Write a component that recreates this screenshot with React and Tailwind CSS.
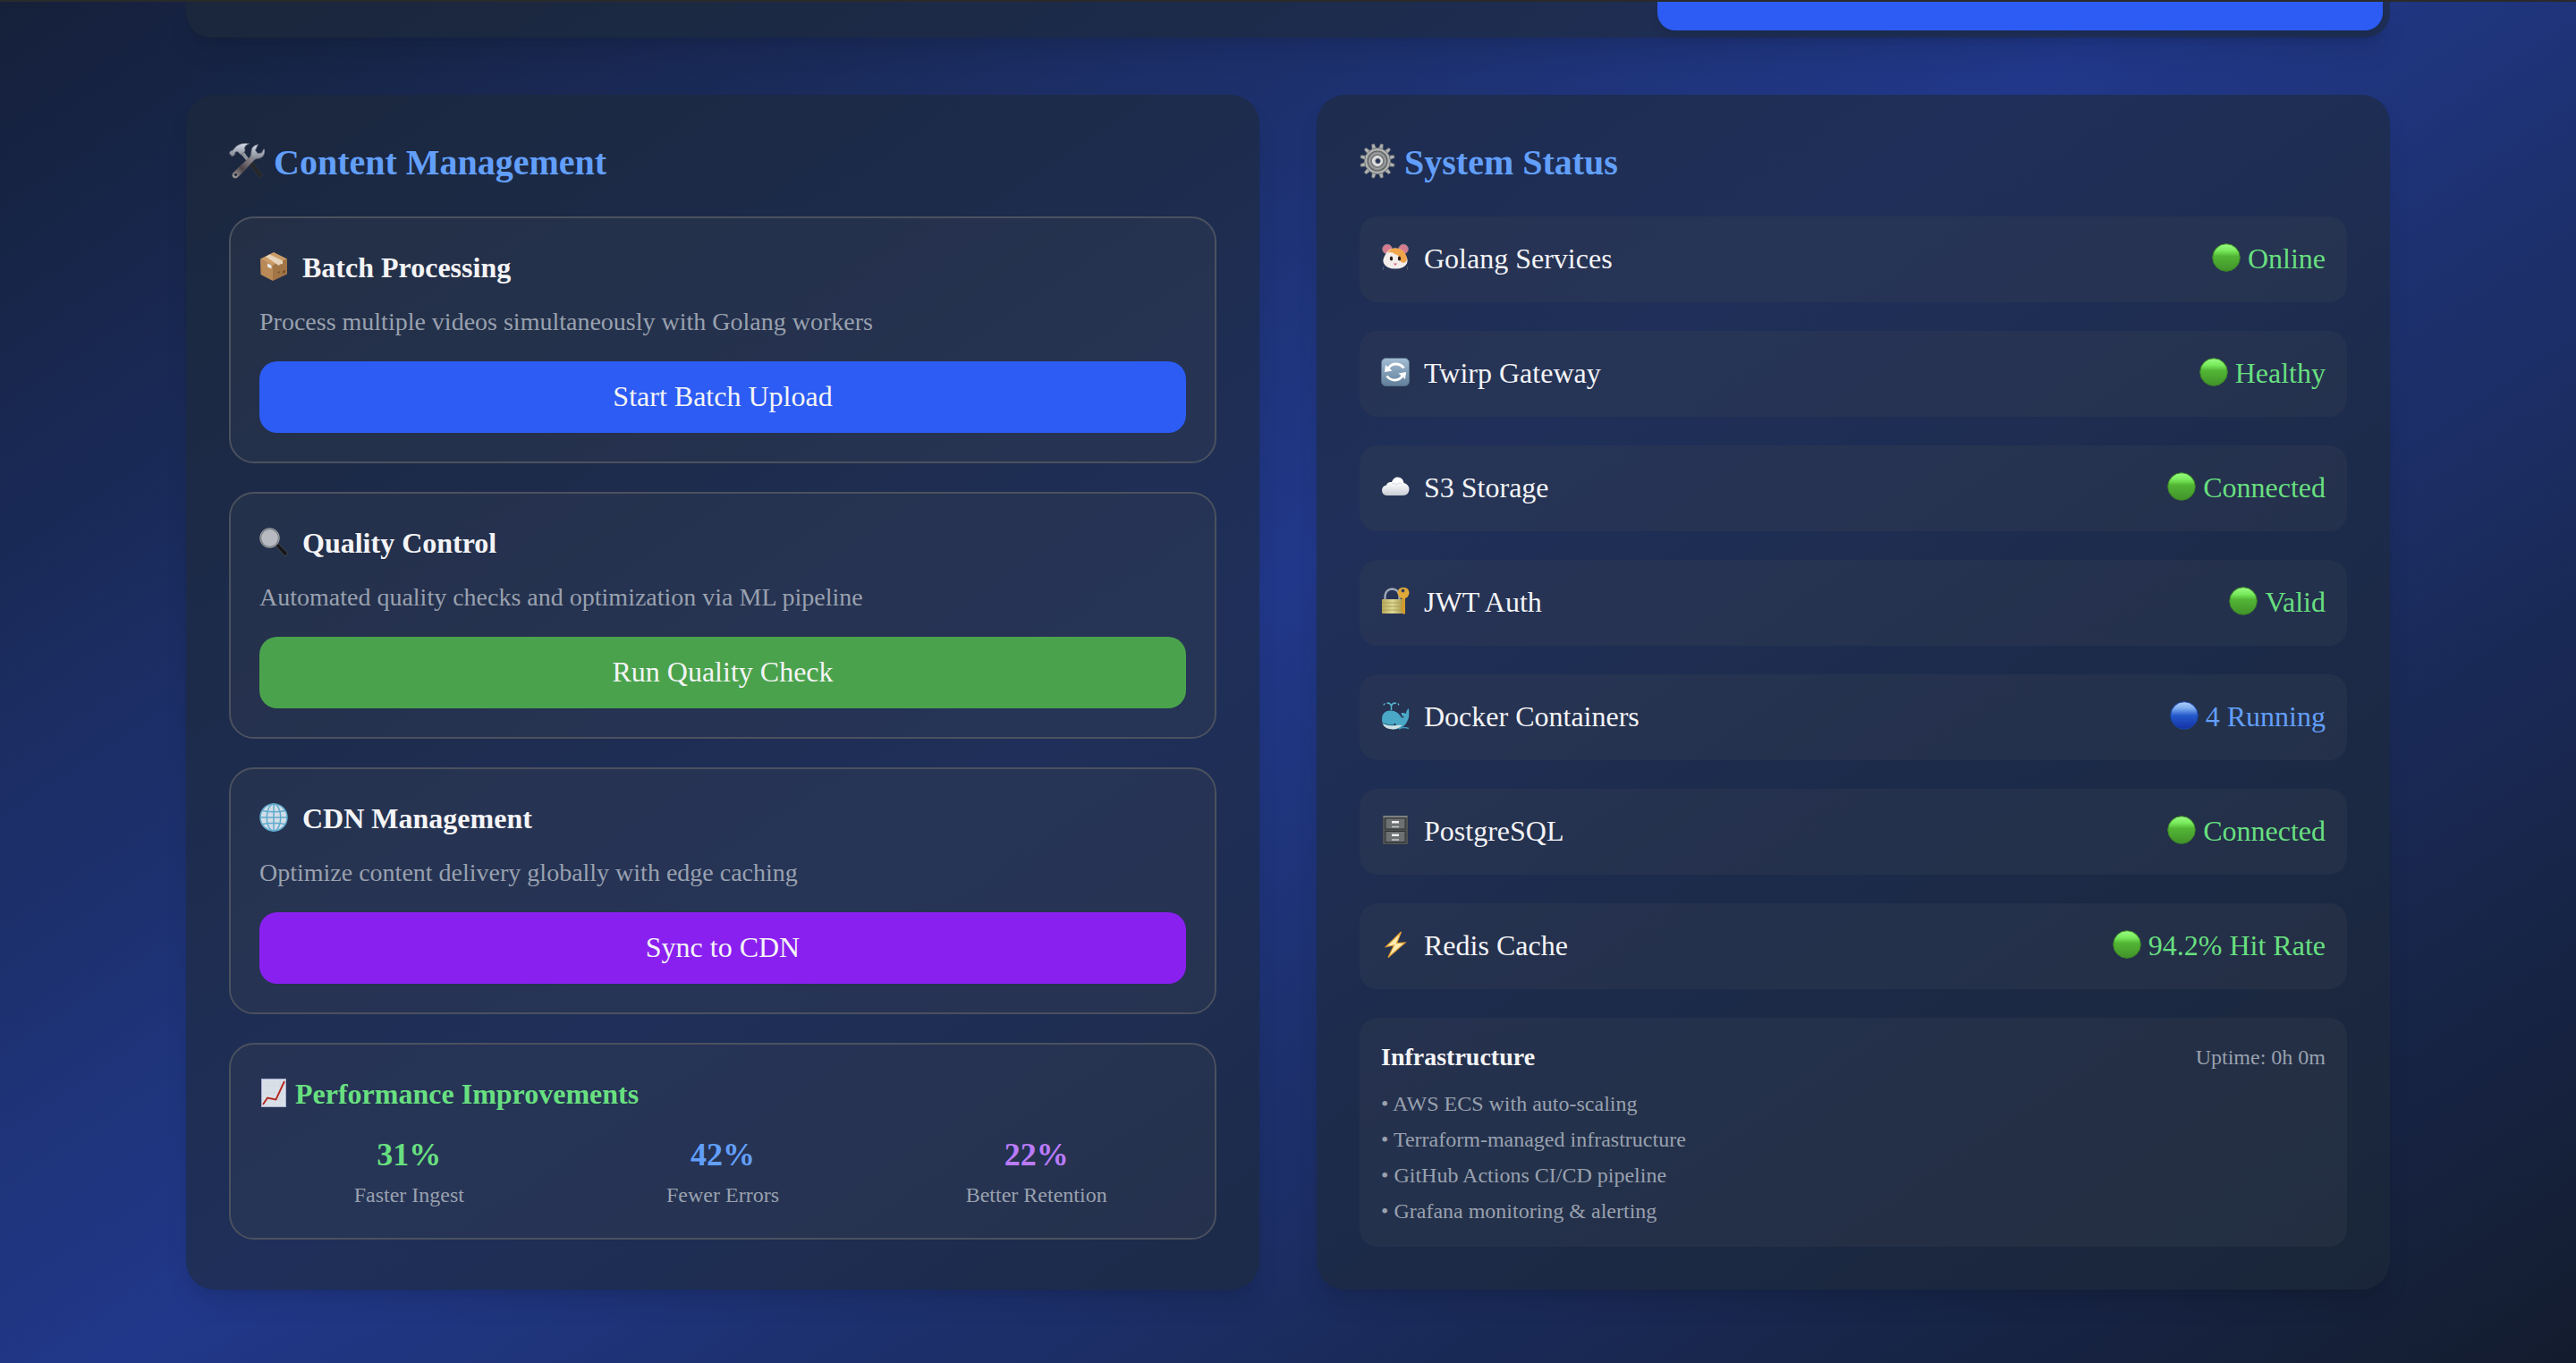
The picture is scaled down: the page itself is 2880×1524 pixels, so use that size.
const Tools = () => (
  <svg viewBox="0 0 40 40" className="mb-1 size-10 shrink-0">
    <defs>
      <linearGradient id="steel" x1="0" y1="0" x2="0" y2="1">
        <stop offset="0" stopColor="#d5dded" />
        <stop offset="1" stopColor="#7f838c" />
      </linearGradient>
      <linearGradient id="shaft" x1="1" y1="0" x2="0" y2="1">
        <stop offset="0" stopColor="#a9a6ab" />
        <stop offset=".6" stopColor="#4d4347" />
        <stop offset="1" stopColor="#b5b2b5" />
      </linearGradient>
    </defs>
    <path d="M12 10.500L15.500 8 23 18.500l-2.500 2.500z" fill="#8f939b" />
    <path d="M20.500 20.500l3.500-2.500L37.500 35q-.5 3.500-3.500 4z" fill="#25272a" stroke="#3d4044" strokeWidth=".5" />
    <path d="M26 13l4 4L11.500 36.500q-2.500 3.500-6 2.500-3-2-1-5.500z" fill="url(#shaft)" stroke="#625c60" strokeWidth=".6" />
    <path d="M32.500 1.500Q25 3 25 9q0 4-1 5.500l4 4q3-1.500 6-1.500 6-1.500 6-9l-1-1.500-2.500 4.500-4.500.5-2.500-3.500z" fill="url(#steel)" stroke="#696d76" strokeWidth=".7" />
    <path d="M1.500 9l2.500-.5Q8 2 14 .8q5-1.300 8.500 0-4 1-5 4.200L18 9l-4.500 4-4-3.500Q7.500 9 6.500 11l.5 1.500L3.500 15 .5 11.500z" fill="url(#steel)" stroke="#696d76" strokeWidth=".7" />
    <circle cx="7.500" cy="35.300" r="1.600" fill="#1e2939" />
  </svg>
);

const Gear = () => (
  <svg viewBox="0 0 40 40" className="mb-1 size-10 shrink-0">
    <g fill="#b0b3b3" stroke="#5d6061" strokeWidth=".6">
      {[15, 45, 75, 105, 135, 165, 195, 225, 255, 285, 315, 345].map((a) => (
        <path key={a} d="M17.500 7l1-6.500h3l1 6.500z" transform={`rotate(${a} 20 20)`} />
      ))}
    </g>
    <circle cx="20" cy="20" r="14.500" fill="#b0b3b2" stroke="#6d7071" strokeWidth="1" />
    <circle cx="20" cy="20" r="11" fill="#8b8d8e" stroke="#5f6263" strokeWidth="1.200" />
    <circle cx="20" cy="20" r="8.500" fill="#77797a" stroke="#a9abac" strokeWidth="1" />
    <circle cx="20" cy="20" r="5.500" fill="#d5d7d8" stroke="#ededee" strokeWidth="1" />
    <circle cx="20.500" cy="20" r="2.600" fill="#25345e" stroke="#55585b" strokeWidth="1" />
  </svg>
);

const Package = () => (
  <svg viewBox="0 0 32 32" className="mb-0.5 size-8 shrink-0">
    <path d="M1 7.500L15 14v18L1.500 25z" fill="#b98a57" />
    <path d="M31 7.500L15 14v18l16-7.500z" fill="#a27546" />
    <path d="M16 0l15 7.500L15 14.500 1 7.500z" fill="#cb9c68" />
    <path d="M11.500 2.500L26 9.500V13l-3 .5-1.500 1.500-2.500-2L7 5z" fill="#e6d3ba" />
    <path d="M9 12.500l4.500 2v4l-4.500-2z" fill="#e8e6e3" />
    <path d="M20 22.500l3.500-1.500-1.500 3zM26 21l3-1.500v3L26 24z" fill="#7a5530" />
  </svg>
);

const Magnifier = () => (
  <svg viewBox="0 0 32 32" className="mb-0.5 size-8 shrink-0">
    <path d="M18 20l3-2.500L31 27.500q1 2.500-1 3.500t-3-.5z" fill="#17181a" stroke="#55575b" strokeWidth=".7" />
    <circle cx="11.500" cy="11.500" r="10.300" fill="#b7bac1" stroke="#6c7075" strokeWidth="1.800" />
    <circle cx="11.500" cy="11.500" r="10.700" fill="none" stroke="#c5c9cf" strokeWidth=".6" />
  </svg>
);

const Globe = () => (
  <svg viewBox="0 0 32 32" className="mb-0.5 size-8 shrink-0">
    <circle cx="16" cy="16" r="15" fill="#d3dde8" />
    <g fill="none" stroke="#5fabcd" strokeWidth="1.500">
      <circle cx="16" cy="16" r="15" />
      <ellipse cx="16" cy="16" rx="7.800" ry="15" />
      <path d="M16 1v30M1 16h30M3.500 8.500q12.500 2.500 25 0M3.500 23.500q12.500-2.500 25 0" />
    </g>
  </svg>
);

const Chart = () => (
  <svg viewBox="0 0 32 32" className="mb-0.5 size-8 shrink-0">
    <rect x="2.500" y=".5" width="27" height="31" fill="#dae0e8" stroke="#a9b0d0" />
    <path d="M9 1v30M16 1v30M23 1v30M3 8h26M3 16h26M3 24h26" stroke="#cdd4dd" strokeWidth=".5" />
    <path d="M4 29l5-7.500 9.500 2L28 3" fill="none" stroke="#b5271f" strokeWidth="1.900" />
  </svg>
);

const Hamster = () => (
  <svg viewBox="0 0 32 32" className="mb-0.5 size-8 shrink-0">
    <path d="M3 26l-1 4M29 26l1 4" stroke="#666b7c" strokeWidth=".8" />
    <circle cx="7" cy="6.500" r="5.300" fill="#d77c90" stroke="#98808c" strokeWidth="1" />
    <circle cx="25" cy="6.500" r="5.300" fill="#d77c90" stroke="#98808c" strokeWidth="1" />
    <path d="M16 5.500q8 0 11 7 4 6 2 10-3 6-13 6T3 22.500q-2-4 2-10 3-7 11-7z" fill="#f3eeea" />
    <path d="M7 10.500q4-5 9-5 9 0 12 8 2.500 6-1.500 8-5 1-6-4-1-5-4.500-5-4-3.500-9-2z" fill="#f0a54a" />
    <ellipse cx="11.500" cy="17" rx="1.700" ry="2.500" fill="#2b1d1a" />
    <ellipse cx="20.500" cy="17" rx="1.700" ry="2.500" fill="#2b1d1a" />
    <path d="M14 22.500h4L16 25z" fill="#d9607a" />
  </svg>
);

const Cycle = () => (
  <svg viewBox="0 0 32 32" className="mb-0.5 size-8 shrink-0">
    <defs>
      <linearGradient id="cyc" x1="0" y1="0" x2="0" y2="1">
        <stop offset="0" stopColor="#a3bdd3" />
        <stop offset="1" stopColor="#617f9b" />
      </linearGradient>
    </defs>
    <rect x=".5" y=".5" width="31" height="31" rx="5" fill="url(#cyc)" stroke="#587089" />
    <g fill="none" stroke="#fff" strokeWidth="2.800">
      <path d="M8 12q3-5 8.500-5 5.500 0 9 4.500" />
      <path d="M24 20q-3 5-8.500 5-5.500 0-9-4.500" />
    </g>
    <path d="M4 16l1-8 7.500 6.500zM28 16l-1 8-7.500-6.500z" fill="#fff" />
  </svg>
);

const Cloud = () => (
  <svg viewBox="0 0 32 32" className="mb-0.5 size-8 shrink-0">
    <defs>
      <linearGradient id="cld" x1="0" y1="0" x2="0" y2="1">
        <stop offset=".3" stopColor="#fdfdfe" />
        <stop offset="1" stopColor="#c9cdd3" />
      </linearGradient>
    </defs>
    <path d="M7.500 26q-6 0-6.500-5.500 0-5 5-6 1-4 6-3.500Q14 5.500 18.500 5.500q6 0 7 6.500 6 1.500 6 7.500-.5 6-7 6.500z" fill="url(#cld)" />
    <path d="M12 13q3-2 5 1 3-3 6-1.500" fill="none" stroke="#d6d9de" strokeWidth="1" />
  </svg>
);

const Lock = () => (
  <svg viewBox="0 0 32 32" className="mb-0.5 size-8 shrink-0">
    <defs>
      <linearGradient id="brs" x1="0" y1="0" x2="1" y2="0">
        <stop offset="0" stopColor="#b5a858" />
        <stop offset=".45" stopColor="#dcd795" />
        <stop offset="1" stopColor="#a08e40" />
      </linearGradient>
    </defs>
    <path d="M4.500 15v-5q1-7 8-7.500 7 .5 8 7.500v5" fill="none" stroke="#9fa6b5" strokeWidth="2.400" />
    <rect x="1" y="14" width="26" height="16" rx="1" fill="url(#brs)" />
    <path d="M1 18h26M1 22h26M1 26h26" stroke="#a2964d" strokeWidth=".7" />
    <path d="M23.500 12h3.500v18l-1.500 1-2-2v-3l-2-1 2-2-2-2 2-2z" fill="#d39b2c" />
    <path d="M25 .8q6 0 6.500 6-.5 6-6.500 6.500-6-.5-6.500-6.500.5-6 6.500-6z" fill="#e0a938" />
    <circle cx="24.500" cy="4.500" r="1.900" fill="#39445c" />
  </svg>
);

const Whale = () => (
  <svg viewBox="0 0 32 32" className="mb-0.5 size-8 shrink-0">
    <path d="M11.500 10V5.500Q10 1 6.500 2.500M11.500 5.500Q13 1 17 2.500M4 2.500l-1 2M19 2.500l1 2" fill="none" stroke="#55b5cc" strokeWidth="1.500" />
    <path d="M1 20Q1 10.500 11 10.500q7 0 11 6.500 2 3 4 .5-3 0-3.500-4.500 4-.5 5.500 1 0-4 3-6 1 9-1 13-3 9-14 10.500Q1 31.500 1 20z" fill="#4ba7c6" />
    <path d="M1.500 25q6 3 13 2.500 6-1 9-.500-4 4-10 4.500-9 0-12-6.500z" fill="#cfe0e4" />
    <path d="M2 24.500q7 3 12 2" fill="none" stroke="#256f8d" strokeWidth="1" />
    <circle cx="15.500" cy="26" r="1.100" fill="#0d1b26" />
    <path d="M20 31q5-2.500 11-.5" fill="none" stroke="#3f9bb9" strokeWidth="1.500" />
  </svg>
);

const Cabinet = () => (
  <svg viewBox="0 0 32 32" className="mb-0.5 size-8 shrink-0">
    <rect x="2" y="0" width="28" height="32" rx="1" fill="#4f5252" />
    <path d="M2.500 1h27" stroke="#8d9090" strokeWidth="1.500" />
    <rect x="5" y="3" width="22" height="12" fill="#6e7172" stroke="#303333" />
    <rect x="5" y="17.500" width="22" height="12" fill="#6e7172" stroke="#303333" />
    <path d="M12 6h8v2.500h-8zM12 20.500h8V23h-8z" fill="#f0f0f0" />
    <path d="M12 12.500h8M12 27h8" stroke="#c5c7c8" strokeWidth="1.300" />
  </svg>
);

const Bolt = () => (
  <svg viewBox="0 0 32 32" className="mb-0.5 size-8 shrink-0">
    <path d="M22.500 2L5.500 18.500l9-1.500L8 30.500 27 14l-9.500.5z" fill="#fbeeb4" stroke="#e5a134" strokeWidth="1.200" />
  </svg>
);

const Dot = ({ blue }) => (
  <svg viewBox="0 0 32 32" className="mb-0.5 size-8 shrink-0">
    <defs>
      <linearGradient id="gdot" x1="0" y1="0" x2="0" y2="1">
        <stop offset="0" stopColor="#9bfd86" />
        <stop offset=".25" stopColor="#78ea5b" />
        <stop offset=".45" stopColor="#52b535" />
        <stop offset="1" stopColor="#41922a" />
      </linearGradient>
      <linearGradient id="bdot" x1="0" y1="0" x2="0" y2="1">
        <stop offset="0" stopColor="#b4d2fa" />
        <stop offset=".25" stopColor="#7ba9ee" />
        <stop offset=".5" stopColor="#2459cc" />
        <stop offset="1" stopColor="#1330a3" />
      </linearGradient>
    </defs>
    <circle cx="16" cy="16" r="15.300" fill={blue ? "url(#bdot)" : "url(#gdot)"} stroke={blue ? "#1a48ac" : "#3c8626"} strokeWidth="1" />
  </svg>
);

const tools = [
  { Icon: Package, title: "Batch Processing", text: "Process multiple videos simultaneously with Golang workers", action: "Start Batch Upload", color: "bg-[#2c5cf4]" },
  { Icon: Magnifier, title: "Quality Control", text: "Automated quality checks and optimization via ML pipeline", action: "Run Quality Check", color: "bg-[#4aa34c]" },
  { Icon: Globe, title: "CDN Management", text: "Optimize content delivery globally with edge caching", action: "Sync to CDN", color: "bg-[#8a20f0]" },
];

const gains = [
  { value: "31%", label: "Faster Ingest", color: "text-[#68df80]" },
  { value: "42%", label: "Fewer Errors", color: "text-[#629ffa]" },
  { value: "22%", label: "Better Retention", color: "text-[#b97bf9]" },
];

const services = [
  { Icon: Hamster, name: "Golang Services", status: "Online" },
  { Icon: Cycle, name: "Twirp Gateway", status: "Healthy" },
  { Icon: Cloud, name: "S3 Storage", status: "Connected" },
  { Icon: Lock, name: "JWT Auth", status: "Valid" },
  { Icon: Whale, name: "Docker Containers", status: "4 Running", blue: true },
  { Icon: Cabinet, name: "PostgreSQL", status: "Connected" },
  { Icon: Bolt, name: "Redis Cache", status: "94.2% Hit Rate" },
];

const infra = ["AWS ECS with auto-scaling", "Terraform-managed infrastructure", "GitHub Actions CI/CD pipeline", "Grafana monitoring & alerting"];

const panel = "rounded-[32px] bg-[#1e2939]/60 p-12 shadow-[0_20px_30px_-6px_rgba(0,0,0,0.1),0_8px_12px_-8px_rgba(0,0,0,0.1)]";
const box = "rounded-[28px] border-2 border-[#4b515f] bg-[#364153]/33 bg-clip-padding p-8";

export default function App() {
  return (
    <div className="flex h-[1524px] w-[2880px] flex-col overflow-hidden border-t-2 border-[#2a2a2a] bg-linear-to-br from-[#131b2b] via-[#21388a] to-[#131b2b] bg-[length:2880px_1920px] bg-[position:0_-317px] font-['Liberation_Serif',serif] text-[32px] leading-[46px] text-[#f4f4f6]">
      <div className="mx-[208px] flex h-10 shrink-0 justify-end rounded-b-[28px] bg-[#1e2939]/60 px-2 pb-2 shadow-[0_20px_30px_-6px_rgba(0,0,0,0.1),0_8px_12px_-8px_rgba(0,0,0,0.1)]">
        <div className="w-[811px] rounded-b-[20px] bg-[#2c5cf4] shadow-[0_8px_12px_-2px_rgba(0,0,0,0.1)]" />
      </div>

      <div className="mx-[208px] mt-16 grid grid-cols-2 gap-16">
        <section className={panel}>
          <h2 className="mb-8 flex items-center gap-2.5 text-[40px] leading-[56px] font-bold text-[#629ffa]">
            <Tools />
            Content Management
          </h2>
          <div className="flex flex-col gap-8">
            {tools.map(({ Icon, title, text, action, color }) => (
              <div key={title} className={box}>
                <h3 className="mb-4 flex items-center gap-4 pb-0.5 font-bold">
                  <Icon />
                  {title}
                </h3>
                <p className="mb-6 text-[28px] leading-10 text-[#99a1af]">{text}</p>
                <button className={`block w-full rounded-[20px] pt-4 pb-4.5 text-center ${color}`}>{action}</button>
              </div>
            ))}
            <div className={box}>
              <h3 className="mb-4 flex items-center gap-2 pb-0.5 font-bold text-[#68df80]">
                <Chart />
                Performance Improvements
              </h3>
              <div className="grid grid-cols-3 gap-4 text-center">
                {gains.map((g) => (
                  <div key={g.label}>
                    <div className={`pb-0.5 text-[36px] leading-[54px] font-bold ${g.color}`}>{g.value}</div>
                    <div className="text-2xl leading-8 text-[#99a1af]">{g.label}</div>
                  </div>
                ))}
              </div>
            </div>
          </div>
        </section>

        <section className={panel}>
          <h2 className="mb-8 flex items-center gap-2.5 text-[40px] leading-[56px] font-bold text-[#629ffa]">
            <Gear />
            System Status
          </h2>
          <div className="flex flex-col gap-8">
            {services.map(({ Icon, name, status, blue }) => (
              <div key={name} className="flex items-center justify-between rounded-[20px] bg-[#364153]/33 px-6 pt-6 pb-6.5">
                <div className="flex items-center gap-4">
                  <Icon />
                  {name}
                </div>
                <div className={`flex items-center gap-2 ${blue ? "text-[#629ffa]" : "text-[#68df80]"}`}>
                  <Dot blue={blue} />
                  {status}
                </div>
              </div>
            ))}
            <div className="rounded-[20px] bg-[#364153]/33 p-6">
              <div className="mb-4 flex items-center justify-between">
                <h3 className="text-[28px] leading-10 font-bold">Infrastructure</h3>
                <span className="text-2xl leading-8 text-[#99a1af]">Uptime: 0h 0m</span>
              </div>
              <ul className="flex flex-col gap-2 text-2xl leading-8 text-[#99a1af]">
                {infra.map((line) => (
                  <li key={line}>• {line}</li>
                ))}
              </ul>
            </div>
          </div>
        </section>
      </div>
    </div>
  );
}
